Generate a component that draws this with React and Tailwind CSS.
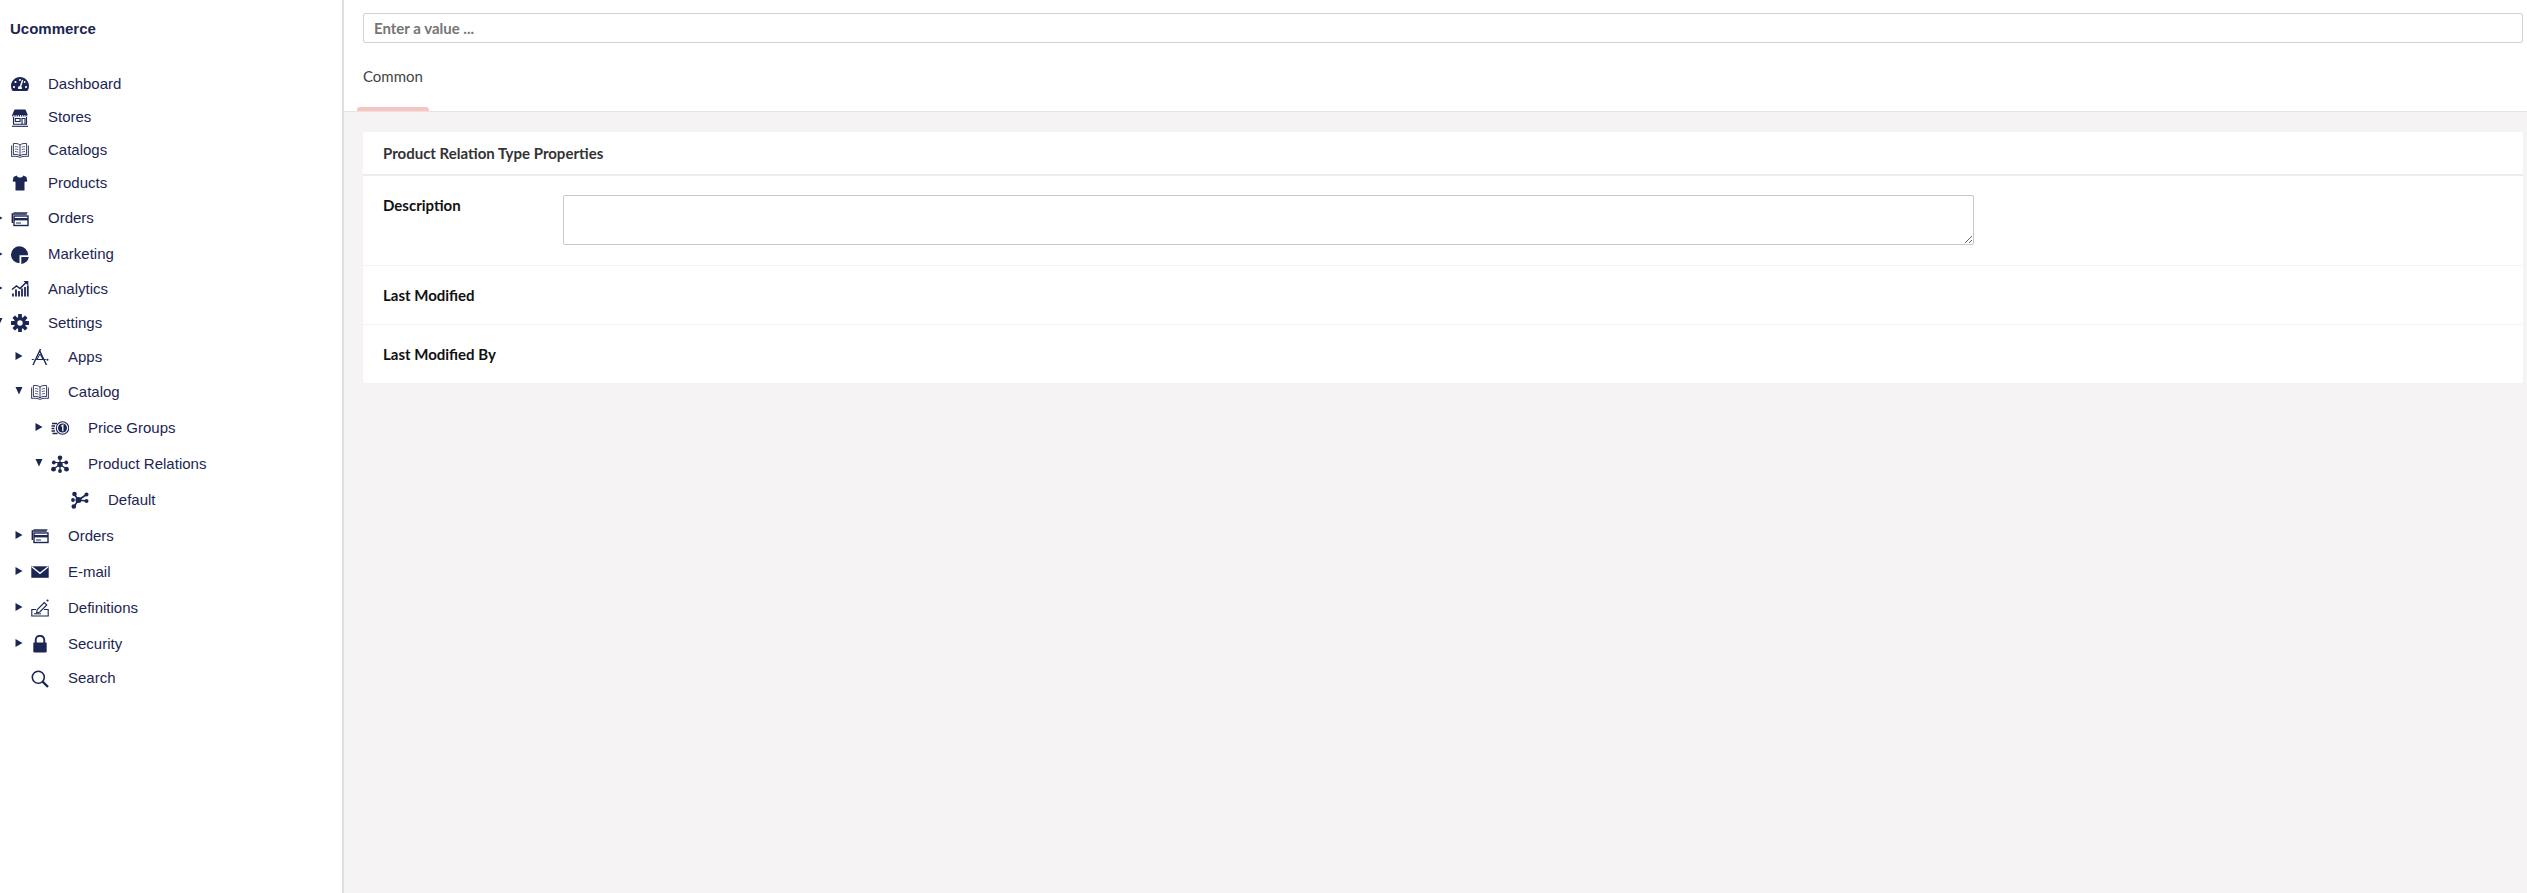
import React from "react";
import { FaTachometerAlt } from "react-icons/fa";

const C = "#1c2653";
const Svg = ({ children }) => (
  <svg width="18" height="18" viewBox="0 0 18 18" fill="none" stroke={C} strokeWidth="1">
    {children}
  </svg>
);

const Store = () => (
  <Svg>
    <path d="M3.500 .5h11l2.300 5.500H1.200z" fill={C} stroke="none" />
    <path d="M1.200 6.800h15.600" stroke={C} strokeWidth="1.600" strokeDasharray="1.300 .9" />
    <path d="M2.500 8v7.200h13V8" strokeWidth="1.100" />
    <rect x="4.300" y="9.500" width="4.800" height="3" strokeWidth="1.100" />
    <path d="M11 15V9.500h3V15" strokeWidth="1.100" />
    <path d="M1 17.300h16" strokeWidth="1.100" />
  </Svg>
);
const Book = () => (
  <Svg>
    <path d="M9 4C7.500 2.600 4.500 2.200 2.400 2.600V13.500c2.100-.4 5.100 0 6.600 1.400 1.500-1.400 4.500-1.800 6.600-1.400V2.600C13.500 2.200 10.500 2.600 9 4zM9 4v10.900" strokeWidth=".9" />
    <path d="M.6 4.500v11c2.800-.6 6-.2 8.400.9 2.400-1.100 5.600-1.500 8.400-.9v-11" strokeWidth=".9" />
    <path d="M4 5.500c1 0 2 .2 3.300.7M4 8c1 0 2 .2 3.300.7M4 10.500c1 0 2 .2 3.300.7M14 5.500c-1 0-2 .2-3.300.7M14 8c-1 0-2 .2-3.300.7M14 10.500c-1 0-2 .2-3.300.7" strokeWidth=".7" />
  </Svg>
);
const Card = () => (
  <Svg>
    <path d="M1.300 13V4h14.500" strokeWidth="1.400" />
    <path d="M2.500 2.800h14" strokeWidth="1" />
    <rect x="3" y="6" width="14" height="9.500" fill="#fff" strokeWidth="1.400" />
    <rect x="3" y="8" width="14" height="2.400" fill={C} stroke="none" />
    <path d="M5 13h5" strokeWidth="1" />
  </Svg>
);
const Tshirt = () => (
  <svg width="18" height="18" viewBox="0 0 18 18">
    <path d="M5.700 1.500L2.500 3.100l-.8 4.400 2.800.3L4.500 16.500h9V7.800l2.800-.3-.8-4.400L12.300 1.500C11.800 3 10.800 3.600 9 3.600S6.200 3 5.700 1.500z" fill={C} />
  </svg>
);
const Pie = () => (
  <Svg>
    <path d="M8.500.3a8.500 8.500 0 1 0 0 17V9.300h8.500A8.500 8.500 0 0 0 8.500.3z" fill={C} stroke="none" />
    <path d="M10.300 11h7.500a8 8 0 0 1-7.500 7z" fill={C} stroke="none" />
  </Svg>
);
const Analytics = () => (
  <Svg>
    <path d="M1 9.500l4.500-3.500 3.500 2.500 6.500-6.500" strokeWidth="1.500" />
    <path d="M12.500 1H17.300V5.800z" fill={C} stroke="none" />
    <path d="M2 16.500v-3M5 16.500v-7M8 16.500v-5.500M11 16.500v-8M14 16.500v-9.500M16.800 16.500v-11" strokeWidth="1.800" />
  </Svg>
);
const Gear = () => {
  const teeth = [0, 45, 90, 135];
  return (
    <svg width="18" height="18" viewBox="0 0 18 18">
      {teeth.map((t) => (
        <rect key={t} x="7.100" y="0" width="3.800" height="18" rx=".5" fill={C} transform={`rotate(${t} 9 9)`} />
      ))}
      <circle cx="9" cy="9" r="6" fill={C} />
      <circle cx="9" cy="9" r="2.700" fill="#fff" />
    </svg>
  );
};
const Apps = () => (
  <Svg>
    <path d="M9.500 1L2 17M8.800 3l6.700 14" strokeWidth="1.400" />
    <path d="M.8 11.500h16" strokeWidth="1" strokeDasharray="2 1" />
    <path d="M9 6l-3 5.500h6z" strokeWidth="1" />
    <circle cx="16.500" cy="11.800" r="1" fill={C} stroke="none" />
  </Svg>
);
const Money = () => (
  <Svg>
    <circle cx="11.500" cy="9" r="6.200" strokeWidth="1.100" />
    <circle cx="11.500" cy="9" r="4.500" fill={C} stroke="none" />
    <path d="M10.300 7.200l1.500-1v6" stroke="#fff" strokeWidth="1.300" />
    <path d="M1 4.500h5M.5 7h3.500M.5 9.500h3M.5 12h3.500M1.500 14.500h5" strokeWidth="1.300" />
  </Svg>
);
const Relations = () => (
  <Svg>
    <path d="M9 3v13M3 7.500L15 7.500M2.500 14L9 9.500l6.500 4.500" strokeWidth="1.200" />
    <circle cx="9" cy="9.500" r="2.700" fill={C} stroke="none" />
    <circle cx="9" cy="2.800" r="2.300" fill={C} stroke="none" />
    <circle cx="2.800" cy="7.500" r="1.900" fill={C} stroke="none" />
    <circle cx="15.200" cy="7.500" r="1.900" fill={C} stroke="none" />
    <circle cx="2.500" cy="14.200" r="2.400" fill={C} stroke="none" />
    <circle cx="15.500" cy="14.200" r="2.400" fill={C} stroke="none" />
    <circle cx="9" cy="16" r="1.900" fill={C} stroke="none" />
  </Svg>
);
const Network = () => (
  <Svg>
    <path d="M3 3l4.500 6L3 15.500M7.500 9l8-5.500M7.500 9l8 1" strokeWidth="1.600" />
    <circle cx="3.500" cy="3" r="2.300" fill={C} stroke="none" />
    <circle cx="7.500" cy="9" r="3" fill={C} stroke="none" />
    <circle cx="2.800" cy="15.500" r="2.300" fill={C} stroke="none" />
    <circle cx="2" cy="9" r="1.900" fill={C} stroke="none" />
    <circle cx="15.500" cy="3.500" r="2" fill={C} stroke="none" />
    <circle cx="15.500" cy="10" r="2" fill={C} stroke="none" />
  </Svg>
);
const Mail = () => (
  <svg width="18" height="18" viewBox="0 0 18 18">
    <rect x="0.300" y="3.300" width="17.400" height="11.500" fill={C} />
    <path d="M.8 3.800L9 10.300l8.200-6.500" fill="none" stroke="#fff" strokeWidth="1.300" />
  </svg>
);
const Defs = () => (
  <Svg>
    <path d="M5 10.500H.8v6.500h16.400v-6.500H13" strokeWidth="1.100" />
    <path d="M5.500 14l.8-3.500 7-7 2.500 2.500-7 7z" strokeWidth="1.100" />
    <path d="M3 14.800h7" strokeWidth="1" />
    <circle cx="16.500" cy="1.500" r="1.100" fill={C} stroke="none" />
  </Svg>
);
const Lock = () => (
  <Svg>
    <path d="M4.700 8V5a4.300 4.300 0 0 1 8.600 0v3" strokeWidth="1.900" />
    <rect x="2.300" y="7.500" width="13.400" height="10" rx="1" fill={C} stroke="none" />
  </Svg>
);
const Search = () => (
  <Svg>
    <circle cx="7.300" cy="7.300" r="6" strokeWidth="1.600" />
    <path d="M11.500 11.500l5.500 5.500" strokeWidth="2.400" />
  </Svg>
);
const Dash = () => <FaTachometerAlt size={18} color={C} />;

const rows = [
  { l: "Dashboard", i: Dash, h: "h-[34px]", m: "-ml-[9px]" },
  { l: "Stores", i: Store, h: "h-[33px]", m: "-ml-[9px]" },
  { l: "Catalogs", i: Book, h: "h-[32px]", m: "-ml-[9px]" },
  { l: "Products", i: Tshirt, h: "h-[34px]", m: "-ml-[9px]" },
  { l: "Orders", i: Card, h: "h-[37px]", m: "-ml-[9px]", a: "r" },
  { l: "Marketing", i: Pie, h: "h-[35px]", m: "-ml-[9px]", a: "r" },
  { l: "Analytics", i: Analytics, h: "h-[34px]", m: "-ml-[9px]", a: "r" },
  { l: "Settings", i: Gear, h: "h-[34px]", m: "-ml-[9px]", a: "d" },
  { l: "Apps", i: Apps, h: "h-[34px]", m: "ml-[11px]", a: "r" },
  { l: "Catalog", i: Book, h: "h-[36px]", m: "ml-[11px]", a: "d" },
  { l: "Price Groups", i: Money, h: "h-[36px]", m: "ml-[31px]", a: "r" },
  { l: "Product Relations", i: Relations, h: "h-[36px]", m: "ml-[31px]", a: "d" },
  { l: "Default", i: Network, h: "h-[36px]", m: "ml-[51px]" },
  { l: "Orders", i: Card, h: "h-[36px]", m: "ml-[11px]", a: "r" },
  { l: "E-mail", i: Mail, h: "h-[36px]", m: "ml-[11px]", a: "r" },
  { l: "Definitions", i: Defs, h: "h-[36px]", m: "ml-[11px]", a: "r" },
  { l: "Security", i: Lock, h: "h-[36px]", m: "ml-[11px]", a: "r" },
  { l: "Search", i: Search, h: "h-[33px]", m: "ml-[11px]" },
];

const Arrow = ({ a }) => (
  <span className="w-[20px] h-full flex items-center pl-[4px] pb-[2px] shrink-0">
    {a === "r" && (
      <svg width="8" height="8" viewBox="0 0 8 8"><path d="M.5 0L7.500 4 .5 8z" fill={C} /></svg>
    )}
    {a === "d" && (
      <svg width="8" height="8" viewBox="0 0 8 8"><path d="M.5 0h7L4 7.500z" fill={C} /></svg>
    )}
  </span>
);

export default function App() {
  return (
    <div className="flex h-screen w-full bg-white overflow-hidden font-['Liberation_Sans',sans-serif]">
      <aside className="w-[344px] shrink-0 border-r-2 border-[#dedede] overflow-hidden text-[#1c2653] text-[15px]">
        <div className="h-[58px] mb-[9px] pl-[10px] flex items-center font-bold">Ucommerce</div>
        <nav>
          {rows.map((r, n) => {
            const I = r.i;
            return (
              <div key={n} className={`flex items-center ${r.h} ${r.m}`}>
                <Arrow a={r.a} />
                <span className="w-[37px] shrink-0 flex items-center">
                  <I />
                </span>
                <span>{r.l}</span>
              </div>
            );
          })}
        </nav>
      </aside>
      <main className="flex-1 flex flex-col bg-[#f5f3f4] font-['Lato',sans-serif] text-[15px]">
        <div className="bg-white h-[112px] border-b border-[#e5e5e5] pt-[13px] flex flex-col">
          <div className="pl-[19px] pr-[4px]">
            <input
              placeholder="Enter a value ..."
              className="w-full h-[30px] border border-[#d2d2d2] rounded-[2px] px-[10px] font-bold text-[15px] placeholder:text-[#757575] bg-white"
            />
          </div>
          <div className="mt-auto ml-[13px] w-[72px] h-[64px]">
            <div className="h-[60px] pt-[15px] pl-[6px] text-[#444444] leading-[28px]">Common</div>
            <div className="h-[4px] bg-[#f7c4c0] rounded-t-[3px]"></div>
          </div>
        </div>
        <div className="pt-[20px] pl-[19px] pr-[4px]">
          <div className="bg-white rounded-[2px]">
            <div className="h-[44px] border-b-2 border-[#ececec] pl-[20px] flex items-center font-bold text-[#333333]">
              Product Relation Type Properties
            </div>
            <div className="h-[90px] border-b border-[#f3f3f3] pl-[20px] pt-[19px] flex items-start">
              <label className="w-[180px] font-bold text-[#111111] leading-[21px]">Description</label>
              <textarea className="w-[1411px] h-[50px] border border-[#c8c8c8] rounded-[2px] bg-white"></textarea>
            </div>
            <div className="h-[59px] border-b border-[#f3f3f3] pl-[20px] flex items-center font-bold text-[#111111]">
              Last Modified
            </div>
            <div className="h-[58px] pl-[20px] flex items-center font-bold text-[#111111]">
              Last Modified By
            </div>
          </div>
        </div>
      </main>
    </div>
  );
}
